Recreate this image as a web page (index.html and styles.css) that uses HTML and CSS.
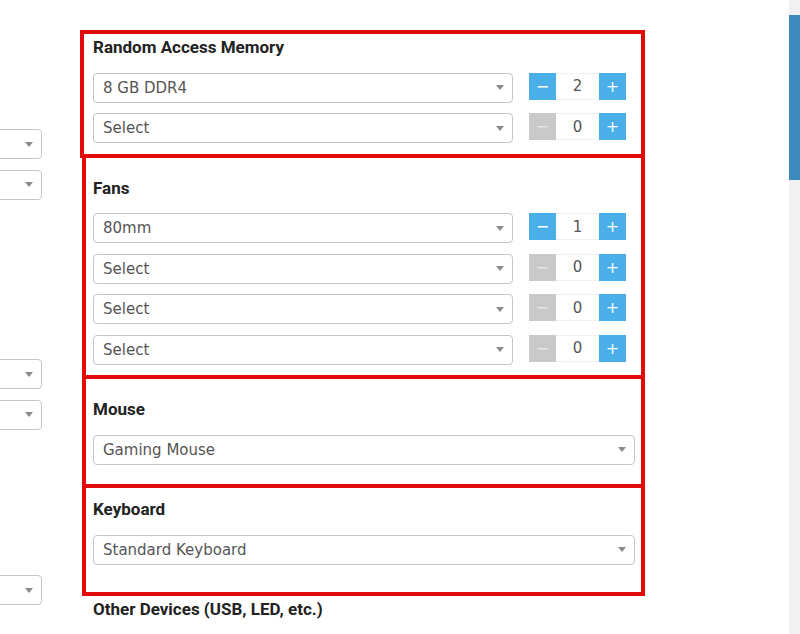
FILE: index.html
```html
<!DOCTYPE html>
<html lang="en">
<head>
    <meta charset="UTF-8">
    <title>Build your PC</title>
    <link rel="stylesheet" href="styles.css">
</head>
<body>

<div class="page">

    <!--left column, mostly scrolled off to the left-->
    <div class="side">
        <div class="side_inner">
            <div class="group">
                <div class="head_space"></div>
                <div class="row"><div class="select"><span></span><i class="caret"></i></div></div>
                <div class="row"><div class="select"><span></span><i class="caret"></i></div></div>
            </div>
            <div class="group group_b">
                <div class="head_space"></div>
                <div class="row"><div class="select"><span></span><i class="caret"></i></div></div>
                <div class="row"><div class="select"><span></span><i class="caret"></i></div></div>
            </div>
            <div class="group group_c">
                <div class="head_space"></div>
                <div class="row"><div class="select"><span></span><i class="caret"></i></div></div>
            </div>
        </div>
    </div>

    <!--main column-->
    <div class="main">
        <div class="group">
            <h3>Random Access Memory</h3>
            <div class="row">
                <div class="select"><span>8 GB DDR4</span><i class="caret"></i></div>
                <div class="stepper">
                    <button class="step">&minus;</button>
                    <span class="qty">2</span>
                    <button class="step">+</button>
                </div>
            </div>
            <div class="row">
                <div class="select"><span>Select</span><i class="caret"></i></div>
                <div class="stepper">
                    <button class="step off">&minus;</button>
                    <span class="qty">0</span>
                    <button class="step">+</button>
                </div>
            </div>
        </div>

        <div class="group">
            <h3>Fans</h3>
            <div class="row">
                <div class="select"><span>80mm</span><i class="caret"></i></div>
                <div class="stepper">
                    <button class="step">&minus;</button>
                    <span class="qty">1</span>
                    <button class="step">+</button>
                </div>
            </div>
            <div class="row">
                <div class="select"><span>Select</span><i class="caret"></i></div>
                <div class="stepper">
                    <button class="step off">&minus;</button>
                    <span class="qty">0</span>
                    <button class="step">+</button>
                </div>
            </div>
            <div class="row">
                <div class="select"><span>Select</span><i class="caret"></i></div>
                <div class="stepper">
                    <button class="step off">&minus;</button>
                    <span class="qty">0</span>
                    <button class="step">+</button>
                </div>
            </div>
            <div class="row">
                <div class="select"><span>Select</span><i class="caret"></i></div>
                <div class="stepper">
                    <button class="step off">&minus;</button>
                    <span class="qty">0</span>
                    <button class="step">+</button>
                </div>
            </div>
        </div>

        <div class="group">
            <h3>Mouse</h3>
            <div class="row">
                <div class="select wide"><span>Gaming Mouse</span><i class="caret"></i></div>
            </div>
        </div>

        <div class="group">
            <h3>Keyboard</h3>
            <div class="row">
                <div class="select wide"><span>Standard Keyboard</span><i class="caret"></i></div>
            </div>
        </div>

        <div class="group">
            <h3>Other Devices (USB, LED, etc.)</h3>
        </div>
    </div>

    <!--fake scrollbar-->
    <div class="scrollbar"><div class="thumb"></div></div>

    <!--red annotation boxes drawn over the form-->
    <div class="marks">
        <div class="mark mark_ram"></div>
        <div class="mark mark_fans"></div>
        <div class="mark mark_mouse"></div>
        <div class="mark mark_keyboard"></div>
    </div>
</div>

</body>
</html>
```

FILE: styles.css
```css
body, html {
    margin: 0;
    padding: 0;
    width: 100%;
    height: 100%;
    background: #fff;
    overflow: hidden;
}

.page {
    display: flex;
    position: relative;
    height: 634px;
}

/*left column*/
.side {
    width: 42px;
    margin-right: 51px;
    overflow: hidden;
    flex: none;
}

.side_inner {
    width: 250px;
    margin-left: -208px;
    padding-top: 93.5px;
}

.head_space {
    height: 20px;
    margin-bottom: 15.5px;
}

.group_b {
    margin-top: 124px;
}

.group_c {
    margin-top: 110px;
}

/*main column*/
.main {
    width: 542px;
    flex: none;
    padding-top: 37px;
}

.group h3 {
    margin: 0 0 15.5px 0;
    font-family: "Roboto", "Liberation Sans", sans-serif;
    font-size: 17px;
    line-height: 20px;
    font-weight: 700;
    color: #222;
}

.main .group + .group {
    margin-top: 34.5px;
}

.row {
    display: flex;
    align-items: flex-start;
    gap: 16px;
}

.row + .row {
    margin-top: 10.5px;
}

.select {
    display: flex;
    align-items: center;
    justify-content: space-between;
    box-sizing: border-box;
    width: 420px;
    height: 30px;
    padding: 0 8px 0 9px;
    border: 1px solid #c6c6c6;
    border-radius: 4px;
    background: #fff;
    font-family: "DejaVu Sans", "Liberation Sans", sans-serif;
    font-size: 15px;
    color: #555;
    flex: none;
}

.side .select {
    width: 250px;
}

.select.wide {
    width: 542px;
}

.caret {
    width: 0;
    height: 0;
    border-left: 4px solid transparent;
    border-right: 4px solid transparent;
    border-top: 5px solid #8a8a8a;
}

/*quantity stepper*/
.stepper {
    display: flex;
    height: 27px;
}

.step {
    width: 27px;
    height: 27px;
    margin: 0;
    padding: 0;
    border: none;
    background: #4aaee8;
    color: #fff;
    font-family: "DejaVu Sans", sans-serif;
    font-size: 16px;
    line-height: 27px;
}

.step.off {
    background: #c9c9c9;
    color: #e6e6e6;
}

.qty {
    display: flex;
    align-items: center;
    justify-content: center;
    box-sizing: border-box;
    width: 43px;
    border-top: 1px solid #efefef;
    border-bottom: 1px solid #efefef;
    font-family: "DejaVu Sans", sans-serif;
    font-size: 15px;
    color: #555;
}

/*scrollbar*/
.scrollbar {
    margin-left: auto;
    width: 11px;
    background: #f1f1f1;
    padding-top: 15px;
    box-sizing: border-box;
}

.thumb {
    height: 165px;
    background: #3b8bbf;
}

/*annotation boxes*/
.marks {
    position: absolute;
    top: 0;
    left: 0;
    right: 0;
    bottom: 0;
    pointer-events: none;
}

.mark {
    position: absolute;
    box-sizing: border-box;
    border: 4px solid #e30a0a;
}

.mark_ram {
    left: 80px;
    top: 30px;
    width: 565px;
    height: 128px;
}

.mark_fans {
    left: 82px;
    top: 154px;
    width: 563px;
    height: 225px;
}

.mark_mouse {
    left: 82px;
    top: 375px;
    width: 563px;
    height: 113px;
}

.mark_keyboard {
    left: 82px;
    top: 484px;
    width: 563px;
    height: 112px;
}
```
